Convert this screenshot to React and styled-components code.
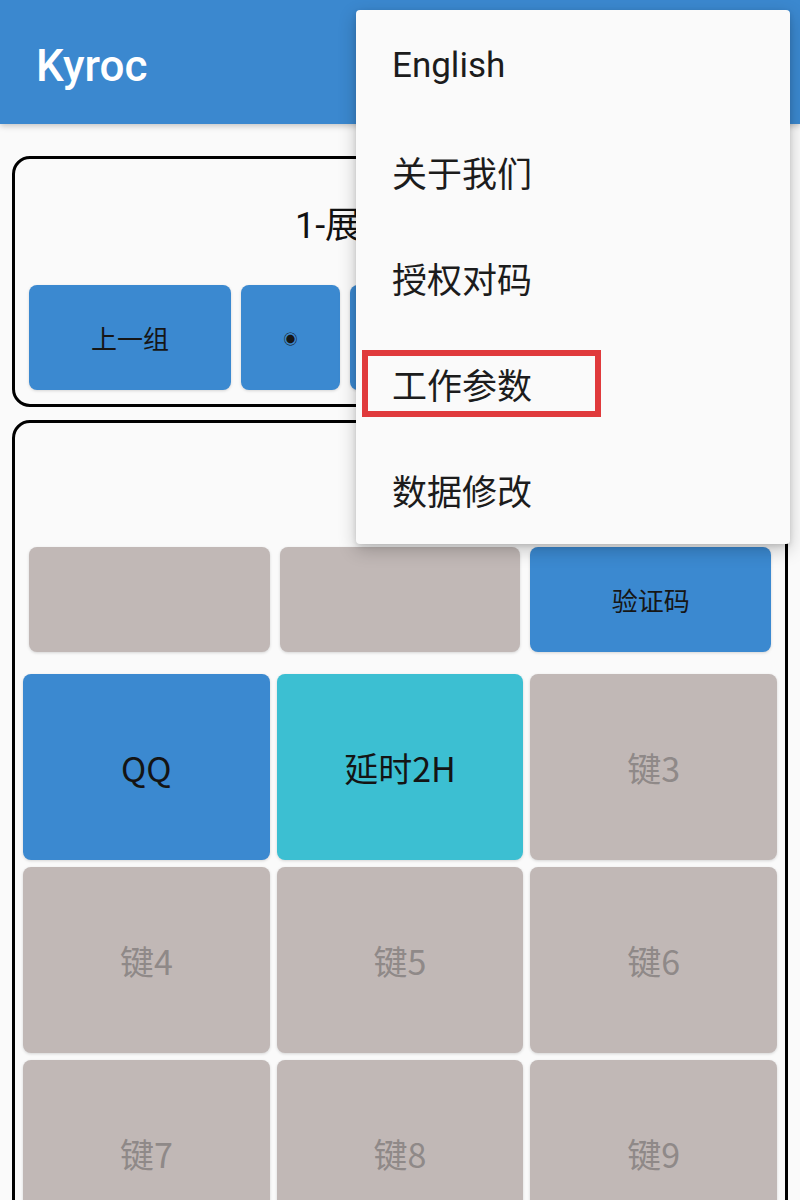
import React from 'react';
import styled, { createGlobalStyle } from 'styled-components';

const GlobalStyle = createGlobalStyle`
  html, body {
    margin: 0;
    padding: 0;
    background: #fafafa;
  }
  body {
    font-family: Roboto, "Noto Sans CJK SC", sans-serif;
  }
`;

const Page = styled.div`
  position: relative;
  width: 800px;
  min-height: 1200px;
  background: #fafafa;
`;

const AppBar = styled.header`
  height: 124px;
  box-sizing: border-box;
  display: flex;
  align-items: center;
  padding: 8px 0 0 36px;
  background: #3b88cf;
  box-shadow: 0 2px 6px rgba(0, 0, 0, 0.22);
  color: #fff;
  font-family: Roboto, sans-serif;
  font-size: 44px;
  font-weight: 500;
`;

const Body = styled.main`
  display: flex;
  flex-direction: column;
  gap: 13px;
  padding: 32px 12px 0;
`;

const Card = styled.section`
  border: 3px solid #000;
  border-radius: 18px;
  padding: 0 14px 14px;
  background: #fafafa;
`;

const CardTitle = styled.div`
  height: ${p => p.$h}px;
  display: flex;
  align-items: center;
  justify-content: center;
  font-family: Roboto, "Noto Sans CJK SC", sans-serif;
  font-size: 36px;
  color: #111;
`;

const NavRow = styled.div`
  display: flex;
  gap: 10px;
`;

const Btn = styled.div`
  flex: ${p => p.$grow || 1};
  height: ${p => p.$h || 105}px;
  display: flex;
  align-items: center;
  justify-content: center;
  border-radius: 8px;
  background: ${p => p.$bg};
  color: ${p => p.$fg || '#161616'};
  font-family: "Noto Sans CJK SC", sans-serif;
  font-size: ${p => p.$size || 26}px;
  box-shadow: 0 1px 3px rgba(0, 0, 0, 0.15);
`;

const TopRow = styled.div`
  display: grid;
  grid-template-columns: repeat(3, 1fr);
  gap: 10px;
`;

const KeyGrid = styled.div`
  display: grid;
  grid-template-columns: repeat(3, 1fr);
  gap: 7px;
  margin: 22px -6px 0;
`;

const Key = styled.div`
  height: 186px;
  display: flex;
  align-items: center;
  justify-content: center;
  border-radius: 8px;
  background: ${p => p.$bg};
  color: ${p => p.$fg};
  font-family: "Noto Sans CJK SC", Roboto, sans-serif;
  font-size: 34px;
  box-shadow: 0 1px 3px rgba(0, 0, 0, 0.15);
`;

const Menu = styled.ul`
  position: absolute;
  top: 10px;
  left: 356px;
  width: 434px;
  margin: 0;
  padding: 2px 0;
  list-style: none;
  background: #fafafa;
  border-radius: 4px;
  box-shadow: 0 6px 18px rgba(0, 0, 0, 0.22), 0 2px 5px rgba(0, 0, 0, 0.12);
`;

const MenuItem = styled.li`
  position: relative;
  height: 106px;
  display: flex;
  align-items: center;
  padding-left: 36px;
  font-family: Roboto, "Noto Sans CJK SC", sans-serif;
  font-size: 35px;
  color: #1c1c1c;
`;

const Highlight = styled.span`
  position: absolute;
  left: 6px;
  top: 20px;
  width: 239px;
  height: 67px;
  box-sizing: border-box;
  border: 6px solid #e03a3c;
  pointer-events: none;
`;

const BLUE = '#3b89d0';
const CYAN = '#3cbfd2';
const GREY = '#c1b8b6';
const GREY_TEXT = '#8f8988';

const keys = [
  { label: 'QQ', bg: BLUE, fg: '#141414' },
  { label: '延时2H', bg: CYAN, fg: '#141414' },
  ...Array.from({ length: 10 }, (_, i) => ({ label: `键${i + 3}`, bg: GREY, fg: GREY_TEXT })),
];

const menuItems = ['English', '关于我们', '授权对码', '工作参数', '数据修改'];

export default function App() {
  return (
    <Page>
      <GlobalStyle />
      <AppBar>Kyroc</AppBar>
      <Body>
        <Card>
          <CardTitle $h={126}>1-展厅卷帘门</CardTitle>
          <NavRow>
            <Btn $grow={2.03} $bg={BLUE}>上一组</Btn>
            <Btn $bg={BLUE} $size={14}>◉</Btn>
            <Btn $bg={BLUE} $size={14}>○</Btn>
            <Btn $bg={BLUE} $size={14}>○</Btn>
            <Btn $grow={2.03} $bg={BLUE}>下一组</Btn>
          </NavRow>
        </Card>
        <Card>
          <CardTitle $h={124} />
          <TopRow>
            <Btn $bg={GREY} />
            <Btn $bg={GREY} />
            <Btn $bg={BLUE}>验证码</Btn>
          </TopRow>
          <KeyGrid>
            {keys.map(k => (
              <Key key={k.label} $bg={k.bg} $fg={k.fg}>{k.label}</Key>
            ))}
          </KeyGrid>
        </Card>
      </Body>
      <Menu>
        {menuItems.map(item => (
          <MenuItem key={item}>
            {item}
            {item === '工作参数' && <Highlight />}
          </MenuItem>
        ))}
      </Menu>
    </Page>
  );
}
